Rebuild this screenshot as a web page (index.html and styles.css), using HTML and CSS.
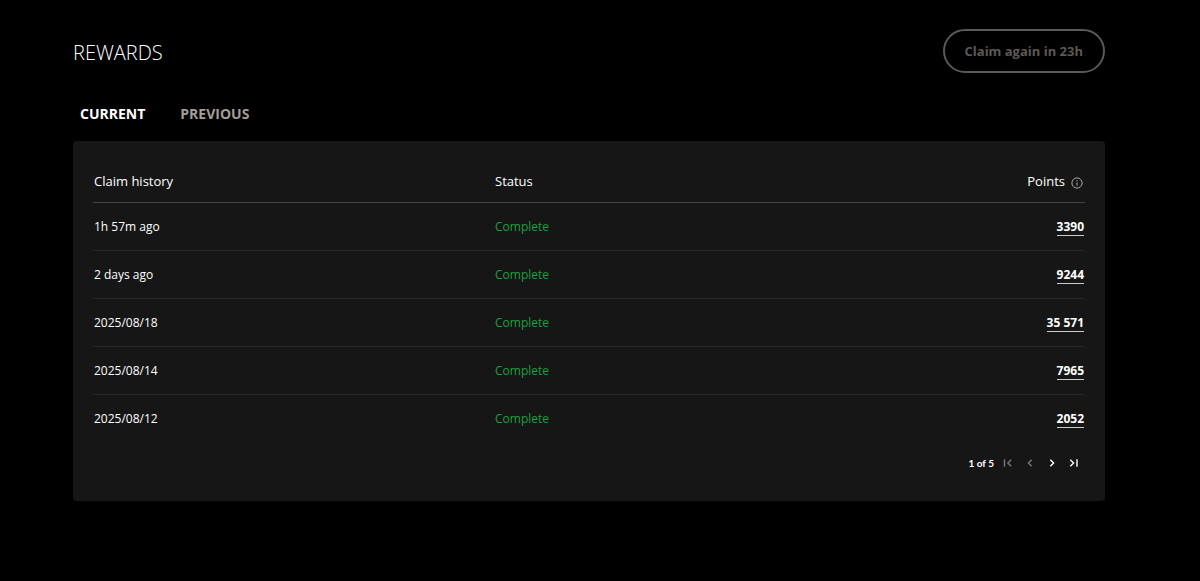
FILE: index.html
```html
<!DOCTYPE html>
<html lang="en">
<head>
<meta charset="utf-8">
<meta name="viewport" content="width=device-width, initial-scale=1">
<title>Rewards</title>
<link rel="stylesheet" href="styles.css">
</head>
<body>
<main class="page">
  <header class="page-header">
    <h1 class="title">REWARDS</h1>
    <button class="claim" type="button" disabled>Claim again in 23h</button>
  </header>
  <nav class="tabs">
    <button class="tab tab-active" type="button">CURRENT</button>
    <button class="tab" type="button">PREVIOUS</button>
  </nav>
  <section class="panel">
    <table class="history">
      <thead>
        <tr>
          <th class="col-date" scope="col">Claim history</th>
          <th scope="col">Status</th>
          <th class="col-points" scope="col">
            <span class="points-head">Points
              <svg class="info" viewBox="0 0 12 12" aria-hidden="true"><circle cx="6" cy="6" r="5.1"/><path d="M6 5.4v3.2M6 3.2v1.2"/></svg>
            </span>
          </th>
        </tr>
      </thead>
      <tbody>
        <tr><td>1h 57m ago</td><td class="status">Complete</td><td class="col-points"><a class="points" href="#">3390</a></td></tr>
        <tr><td>2 days ago</td><td class="status">Complete</td><td class="col-points"><a class="points" href="#">9244</a></td></tr>
        <tr><td>2025/08/18</td><td class="status">Complete</td><td class="col-points"><a class="points" href="#">35 571</a></td></tr>
        <tr><td>2025/08/14</td><td class="status">Complete</td><td class="col-points"><a class="points" href="#">7965</a></td></tr>
        <tr><td>2025/08/12</td><td class="status">Complete</td><td class="col-points"><a class="points" href="#">2052</a></td></tr>
      </tbody>
    </table>
    <div class="pager">
      <span class="pager-text">1 of 5</span>
      <div class="pager-nav">
        <button class="pager-btn" type="button" disabled aria-label="First page"><svg viewBox="0 0 12 12"><path d="M2.5 2.2v7.6M9.2 2.7L5.9 6l3.3 3.3"/></svg></button>
        <button class="pager-btn" type="button" disabled aria-label="Previous page"><svg viewBox="0 0 12 12"><path d="M7.7 2.7L4.4 6l3.3 3.3"/></svg></button>
        <button class="pager-btn" type="button" aria-label="Next page"><svg viewBox="0 0 12 12"><path d="M4.3 2.7L7.6 6L4.3 9.3"/></svg></button>
        <button class="pager-btn" type="button" aria-label="Last page"><svg viewBox="0 0 12 12"><path d="M2.3 2.7L5.6 6L2.3 9.3M9 2.2v7.6"/></svg></button>
      </div>
    </div>
  </section>
</main>
</body>
</html>
```
FILE: styles.css
```css
* {
  box-sizing: border-box;
}

body {
  margin: 0;
  background: #000;
  color: #fff;
  font-family: "Segoe UI", "Open Sans", "Noto Sans", sans-serif;
  font-size: 12px;
}

button {
  font-family: inherit;
  background: none;
  border: 0;
  padding: 0;
}

.page {
  padding: 29px 95px 40px 73px;
}

.page-header {
  display: flex;
  align-items: center;
  justify-content: space-between;
}

.title {
  margin: 0;
  padding-top: 4px;
  font-size: 20px;
  font-weight: 300;
  line-height: 28px;
}

.claim {
  height: 44px;
  padding: 0 20px;
  border: 2px solid #5c5855;
  border-radius: 22px;
  color: #5c5855;
  font-size: 13px;
  font-weight: 700;
}

.tabs {
  display: flex;
  gap: 35px;
  padding: 30px 7px 17px;
}

.tab {
  color: #a39e99;
  font-size: 14px;
  font-weight: 700;
  line-height: 21px;
  cursor: pointer;
}

.tab-active {
  color: #fff;
}

.panel {
  padding: 20px;
  border-radius: 4px;
  background: #161616;
}

.history {
  width: 100%;
  border-collapse: separate;
  border-spacing: 0;
  table-layout: fixed;
}

.history th,
.history td {
  height: 48px;
  padding: 0 1px;
  text-align: left;
  line-height: 16px;
}

.history th {
  height: 42px;
  padding-bottom: 2px;
  font-size: 13px;
  font-weight: 400;
  border-bottom: 1px solid #444;
}

.history td {
  border-bottom: 1px solid #262626;
}

.history tbody tr:last-child td {
  border-bottom-color: transparent;
}

.history .col-date {
  width: 401px;
}

.history .col-points {
  text-align: right;
}

.history td.col-points {
  padding-top: 2px;
}

.points-head {
  display: inline-flex;
  align-items: center;
  gap: 6px;
}

.info {
  width: 12px;
  height: 12px;
  margin: 4px 1px 0 0;
  fill: none;
  stroke: #a8a8a8;
}

.history .status {
  color: #1f9f3f;
}

.points {
  display: inline-block;
  border-bottom: 1px solid #ccc;
  color: #fff;
  font-weight: 700;
  text-decoration: none;
}

.pager {
  display: flex;
  align-items: center;
  justify-content: flex-end;
  gap: 8px;
  padding: 12px 5px 10px 0;
}

.pager-text {
  font-family: Lato, sans-serif;
  font-size: 10px;
  font-weight: 700;
  line-height: 16px;
}

.pager-nav {
  display: flex;
  gap: 10px;
}

.pager-btn {
  display: flex;
  color: #fff;
  cursor: pointer;
}

.pager-btn:disabled {
  color: #777;
  cursor: default;
}

.pager-btn svg {
  width: 12px;
  height: 12px;
  fill: none;
  stroke: currentColor;
  stroke-width: 1.4;
}
```
